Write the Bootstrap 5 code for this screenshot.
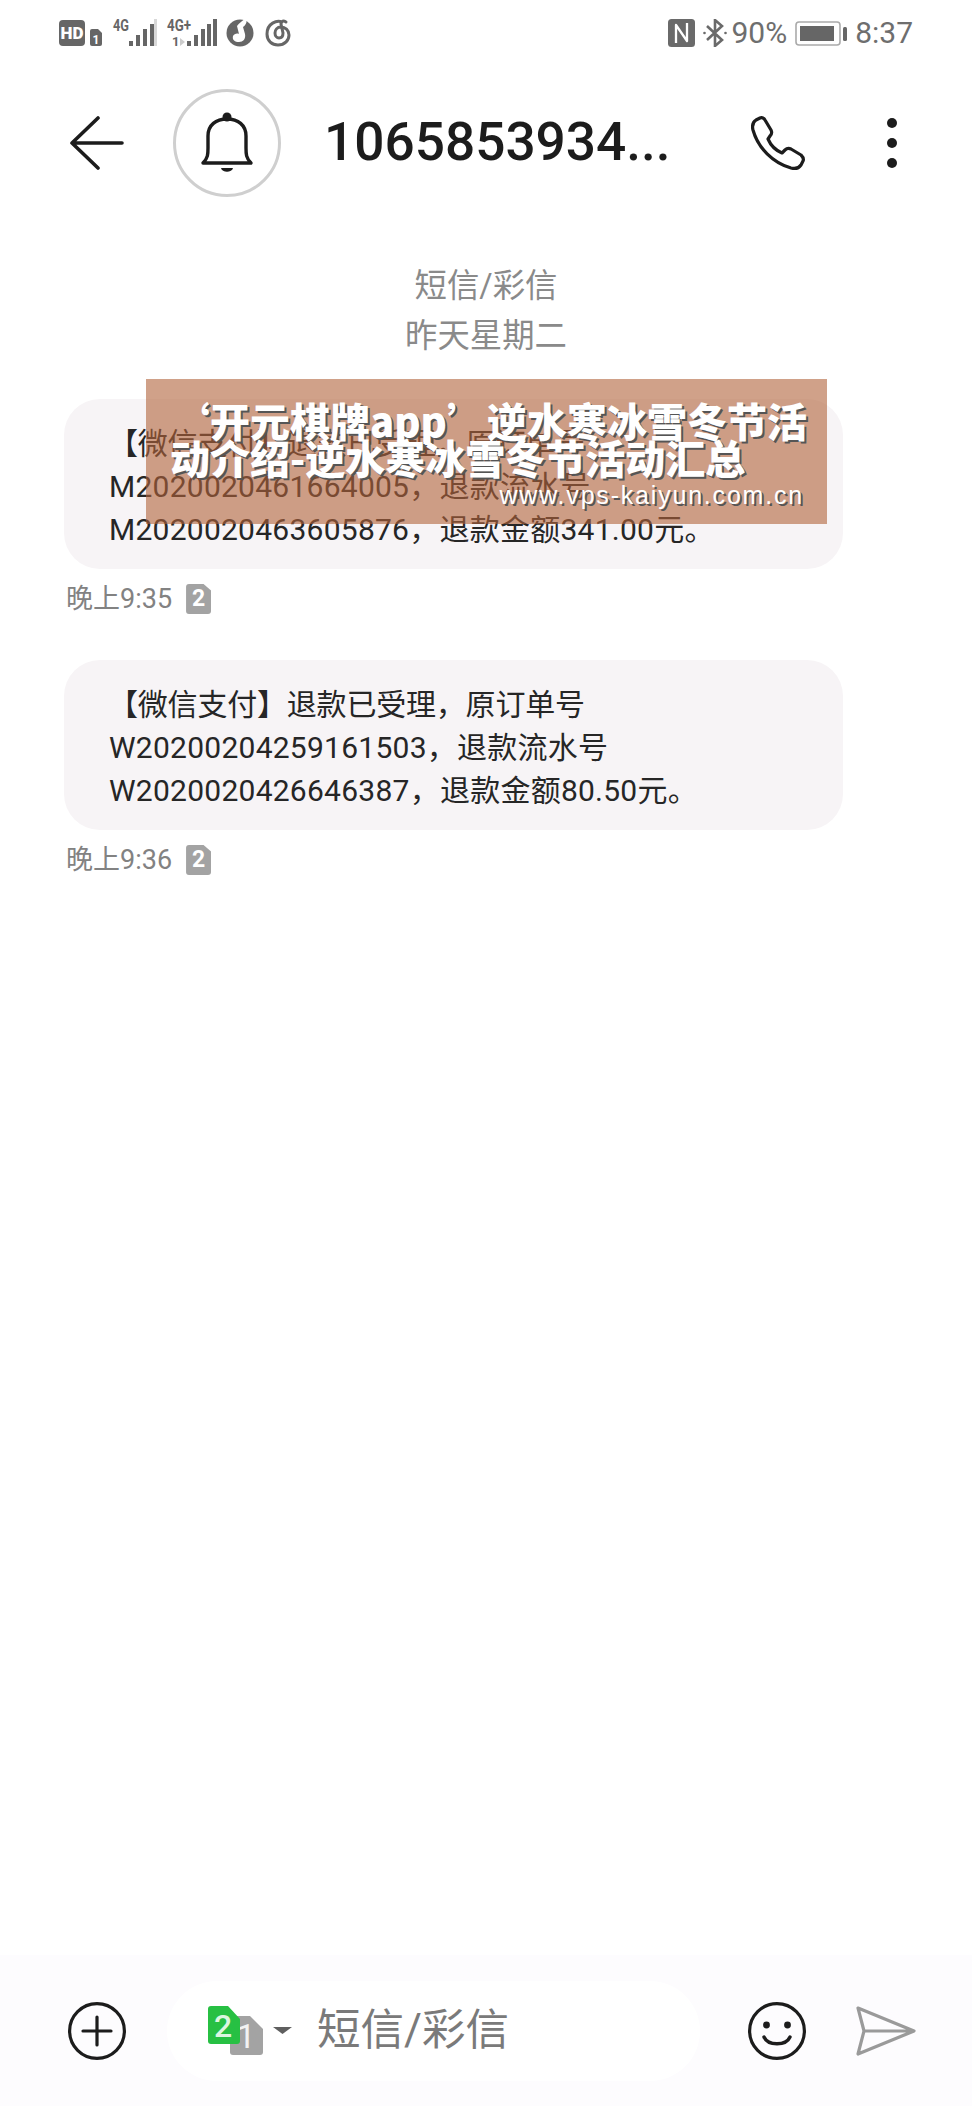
<!DOCTYPE html>
<html lang="zh-CN">
<head>
<meta charset="utf-8">
<title>短信</title>
<link href="https://cdn.jsdelivr.net/npm/bootstrap@5.3.0/dist/css/bootstrap.min.css" rel="stylesheet">
<style>
html,body{margin:0;background:#fff}
.phone-screen{width:972px;height:2106px;overflow:hidden;font-family:Roboto,"Noto Sans CJK SC",sans-serif;color:#222;background:#fff}
.status-row{height:66px;padding:0 59px;color:#6e6e6e;font-size:30px;line-height:1}
.nav-row{height:154px;padding:0 75px 0 70px}
.bell-ring{width:108px;height:108px;border:3px solid #cfcfcf;border-radius:50%;margin-left:49px}
.peer-name{font-size:53.2px;font-weight:500;color:#1c1c1c;margin-left:43px;line-height:1}
.call-icon{margin-right:81px}
.menu-dots{gap:10px;width:10px}
.menu-dots i{display:block;width:10px;height:10px;border-radius:50%;background:#1c1c1c}
.date-block{margin-top:41px;font-size:32.4px;line-height:50px;color:#8a8a8a;height:100px}
.msg-list{padding-left:64px;margin-top:38px}
.msg-bubble{width:779px;background:#f7f4f6;border-radius:36px;padding:23px 30px 18px 45px;font-size:30px;line-height:43px;color:#262626;letter-spacing:.25px}
.head-line{display:block;letter-spacing:-.2px;margin-left:-1px}
.msg-time{height:40px;margin-top:10px;margin-bottom:41px;padding-left:2px;font-size:27px;line-height:40px;color:#828282}
.sim-tag{width:25px;height:30px;margin-left:14px;background:#a3a3a3;color:#fff;font-size:23px;font-weight:700;line-height:30px;text-align:center;border-radius:3px;clip-path:polygon(0 0,70% 0,100% 22%,100% 100%,0 100%)}
.promo-box{left:146px;top:379px;width:681px;height:145px;background:rgba(176,98,58,.6);color:#fff}
.promo-title{position:absolute;left:24px;top:23px;font-family:"Noto Sans CJK SC",sans-serif;font-size:40px;line-height:37px;font-weight:900;text-shadow:2px 2px 0 #555}
.promo-title span{display:block;white-space:nowrap}
.promo-url{position:absolute;right:23px;top:98px;font-family:"Liberation Sans",sans-serif;font-size:25px;line-height:36px;letter-spacing:1.8px;text-shadow:2px 2px 0 #555;white-space:nowrap}
.compose-bar{height:151px;background:#fdfcfe;padding-left:68px}
.compose-pill{width:533px;height:100px;margin-left:41px;background:#fff;border-radius:50px;padding-left:41px}
.compose-hint{margin-left:24px;font-size:43.5px;color:#7a7a7a;line-height:1}
.smile-icon{margin-left:48px}
.send-icon{margin-left:50px}
</style>
</head>
<body>
<div class="phone-screen position-relative d-flex flex-column">

  <div class="status-row d-flex align-items-center justify-content-between flex-shrink-0">
    <svg width="245" height="40" viewBox="59 14 245 40" role="img" aria-label="状态图标">
      <rect x="59" y="21" width="26" height="26" rx="4" fill="#666"/>
      <text x="72" y="40" text-anchor="middle" font-family="Roboto" font-weight="900" font-size="17" fill="#fff">HD</text>
      <path d="M90 32q0-2 2-2h6l4 4v11q0 2-2 2h-8q-2 0-2-2z" fill="#666"/>
      <text x="96" y="45" text-anchor="middle" font-family="Roboto" font-weight="700" font-size="12" fill="#fff">1</text>
      <text x="113" y="32" font-family="Roboto" font-weight="700" font-size="17" fill="#666" textLength="16" lengthAdjust="spacingAndGlyphs">4G</text>
      <g fill="#666"><rect x="129" y="42" width="4" height="5"/><rect x="136" y="36" width="4" height="11"/><rect x="143" y="30" width="4" height="17"/><rect x="150" y="25" width="4" height="22"/></g>
      <rect x="154" y="20" width="3" height="27" fill="#d8d8d8"/>
      <text x="167" y="32" font-family="Roboto" font-weight="700" font-size="17" fill="#666" textLength="24" lengthAdjust="spacingAndGlyphs">4G+</text>
      <text x="172" y="47" font-family="Roboto" font-weight="700" font-size="13" fill="#666">1</text>
      <path d="M180 39l5 4-5 4z" fill="#ccc"/>
      <g fill="#666"><rect x="187" y="42" width="4" height="5"/><rect x="194" y="36" width="4" height="11"/><rect x="201" y="30" width="4" height="17"/><rect x="207" y="25" width="4" height="22"/><rect x="213" y="20" width="4" height="27"/></g>
      <circle cx="240" cy="34" r="13.500" fill="#666"/>
      <path d="M245 20c3 2 1 6-2 8l2 7c1 5-2 8-6 8-4 0-7-2-6-6 1-2 4-3 6-2l-2-8c2-3 5-5 8-7z" fill="#fff"/>
      <path d="M282 23c-5-2-15 1-15 12 0 7 5 11 11 11 7 0 11-5 11-10 0-5-4-8-8-8-4 0-6 3-6 6 0 3 2 5 4 5 3 0 4-2 4-5l-2-9c0-3 3-4 5-2" fill="none" stroke="#666" stroke-width="3" stroke-linecap="round"/>
    </svg>
    <div class="d-flex align-items-center">
      <svg width="27" height="28" viewBox="0 0 27 28"><rect width="27" height="28" rx="3.500" fill="#6a6a6a"/><path d="M8 24V6l11 16V4" stroke="#fff" stroke-width="2.300" fill="none" stroke-linejoin="round"/></svg>
      <svg class="ms-2" width="24" height="28" viewBox="0 0 24 28"><path d="M4 7l15 14-7 6V1l7 6L4 21" fill="none" stroke="#6a6a6a" stroke-width="2.600"/><circle cx="1.500" cy="14" r="1.300" fill="#6a6a6a"/><circle cx="22.500" cy="14" r="1.300" fill="#6a6a6a"/></svg>
      <span class="ms-1">90%</span>
      <svg class="ms-2" width="52" height="25" viewBox="0 0 52 25"><rect x="1" y="1" width="44" height="23" rx="3" fill="none" stroke="#aaa" stroke-width="1.600"/><rect x="5" y="5" width="34" height="15" fill="#666"/><rect x="48" y="6" width="4" height="14" rx="1.500" fill="#666"/></svg>
      <span class="ms-2">8:37</span>
    </div>
  </div>

  <div class="nav-row d-flex align-items-center flex-shrink-0">
    <svg width="54" height="54" viewBox="0 0 54 54"><path d="M28 2L2 27l26 25M2 27h50" fill="none" stroke="#1c1c1c" stroke-width="3.600" stroke-linecap="round" stroke-linejoin="round"/></svg>
    <div class="bell-ring d-flex align-items-center justify-content-center flex-shrink-0">
      <svg width="54" height="62" viewBox="0 0 54 62"><path d="M3 51C8 46 8 42 8 36V24C8 13 16 7 27 7s19 6 19 17v12c0 6 0 10 5 15z" fill="none" stroke="#1c1c1c" stroke-width="3.400" stroke-linejoin="round"/><circle cx="27" cy="5" r="4.500" fill="#1c1c1c"/><path d="M21 56h12c-1 5-11 5-12 0z" fill="#1c1c1c"/></svg>
    </div>
    <div class="peer-name">1065853934...</div>
    <svg class="call-icon ms-auto" width="55" height="55" viewBox="0 0 55 55"><path d="M9 2c2-1 4 0 5 2l6 10c1 2 1 4-1 6l-2 3c3 7 7 11 14 14l3-3c2-2 4-2 6-1l10 6c2 2 3 4 2 6l-2 4c-2 3-6 4-10 3C22 47 7 32 2 14 1 10 2 6 5 4z" fill="none" stroke="#1c1c1c" stroke-width="3.200" stroke-linejoin="round"/></svg>
    <div class="menu-dots d-flex flex-column"><i></i><i></i><i></i></div>
  </div>

  <div class="date-block text-center flex-shrink-0">短信/彩信<br>昨天星期二</div>

  <div class="msg-list flex-grow-1">
    <div class="msg-bubble"><span class="head-line">【微信支付】退款已受理，原订单号</span>M2020020461664005，退款流水号<br>M2020020463605876，退款金额341.00元。</div>
    <div class="msg-time d-flex align-items-center">晚上9:35<span class="sim-tag">2</span></div>
    <div class="msg-bubble"><span class="head-line">【微信支付】退款已受理，原订单号</span>W20200204259161503，退款流水号<br>W2020020426646387，退款金额80.50元。</div>
    <div class="msg-time d-flex align-items-center">晚上9:36<span class="sim-tag">2</span></div>
  </div>

  <div class="compose-bar d-flex align-items-center flex-shrink-0">
    <svg width="58" height="58" viewBox="0 0 58 58"><circle cx="29" cy="29" r="27.400" fill="none" stroke="#1c1c1c" stroke-width="3.200"/><path d="M29 15v28M15 29h28" stroke="#1c1c1c" stroke-width="3.200" stroke-linecap="round"/></svg>
    <div class="compose-pill d-flex align-items-center flex-shrink-0">
      <svg width="85" height="50" viewBox="0 0 85 50">
        <path d="M25 10h17l13 13v23q0 3-3 3H25q-3 0-3-3V13q0-3 3-3z" fill="#a3a3a3"/>
        <text x="38" y="42" text-anchor="middle" font-family="Roboto" font-size="34" fill="#f2f2f2">1</text>
        <path d="M3 0h17l12 13v22q0 3-3 3H3q-3 0-3-3V3q0-3 3-3z" fill="#27c043"/>
        <text x="15" y="31" text-anchor="middle" font-family="Roboto" font-weight="500" font-size="32" fill="#dcf6e0">2</text>
        <path d="M65 21h19l-9.500 7z" fill="#5f5f5f"/>
      </svg>
      <span class="compose-hint">短信/彩信</span>
    </div>
    <svg class="smile-icon" width="58" height="58" viewBox="0 0 58 58"><circle cx="29" cy="29" r="27.400" fill="none" stroke="#1c1c1c" stroke-width="3.200"/><circle cx="18.500" cy="23" r="3.400" fill="#1c1c1c"/><circle cx="39.500" cy="23" r="3.400" fill="#1c1c1c"/><path d="M16 35c4 9 22 9 26 0" fill="none" stroke="#1c1c1c" stroke-width="3.400" stroke-linecap="round"/></svg>
    <svg class="send-icon" width="60" height="50" viewBox="0 0 60 50"><path d="M2 2l56 23L2 48l6-23zM8 25h50" fill="none" stroke="#9a9a9a" stroke-width="3.200" stroke-linejoin="round"/></svg>
  </div>

  <div class="promo-box position-absolute">
    <div class="promo-title"><span>‘开元棋牌app’逆水寒冰雪冬节活</span><span>动介绍-逆水寒冰雪冬节活动汇总</span></div>
    <div class="promo-url">www.vps-kaiyun.com.cn</div>
  </div>
</div>
<script src="https://cdn.jsdelivr.net/npm/bootstrap@5.3.0/dist/js/bootstrap.bundle.min.js"></script>
</body>
</html>
